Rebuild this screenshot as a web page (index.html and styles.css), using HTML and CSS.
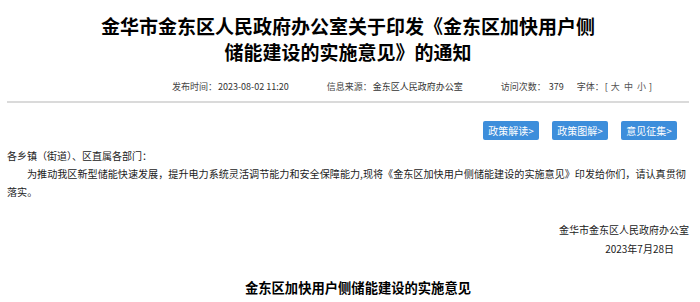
FILE: index.html
```html
<!DOCTYPE html>
<html lang="zh-CN">
<head>
  <meta charset="UTF-8">
  <title>金华市金东区人民政府办公室关于印发《金东区加快用户侧储能建设的实施意见》的通知</title>
  <link rel="stylesheet" href="styles.css">
</head>
<body>

  <div class="page">
    <h1 class="title">金华市金东区人民政府办公室关于印发《金东区加快用户侧<br>储能建设的实施意见》的通知</h1>

    <div class="meta">
      <span class="label">发布时间：</span><span class="value time">2023-08-02 11:20</span>
      <span class="label">信息来源：</span><span class="value source">金东区人民政府办公室</span>
      <span class="label">访问次数：</span><span class="value count">379</span>
      <span class="label">字体：</span><span class="value size">[ <a>大</a> <a>中</a> <a>小</a> ]</span>
    </div>

    <div class="tools">
      <a class="btn">政策解读&gt;</a>
      <a class="btn">政策图解&gt;</a>
      <a class="btn">意见征集&gt;</a>
    </div>

    <div class="content">
      <p>各乡镇（街道）、区直属各部门：</p>
      <p class="indent">为推动我区新型储能快速发展，提升电力系统灵活调节能力和安全保障能力,现将《金东区加快用户侧储能建设的实施意见》印发给你们，请认真贯彻落实。</p>

      <p class="sign">金华市金东区人民政府办公室</p>
      <p class="sign date">2023年7月28日</p>

      <p class="subtitle">金东区加快用户侧储能建设的实施意见</p>
    </div>
  </div>

</body>
</html>
```

FILE: styles.css
```css
body {
  margin: 0;
  background-color: #fff;
  font-family: "Noto Sans CJK SC", "Liberation Sans", sans-serif;
  color: #222;
}

.page {
  padding: 0 11px 0 7px;
}

.title {
  margin: 13px 0 0;
  font-size: 19px;
  line-height: 26px;
  font-weight: bold;
  color: #000;
  text-align: center;
}

.meta {
  display: flex;
  padding: 13px 0 5px 165px;
  font-size: 9px;
  line-height: 18px;
  color: #444;
  border-bottom: 2px solid #dadada;
}

.meta .value {
  color: #333;
  margin-left: 1px;
}

.meta .time,
.meta .source {
  margin-right: 38px;
}

.meta .count {
  margin-left: 3px;
  margin-right: 13px;
}

.meta .size a {
  color: #555;
  padding: 0 1px;
}

.tools {
  display: flex;
  justify-content: flex-end;
  gap: 13px;
  margin-top: 18px;
  padding-right: 12px;
}

.btn {
  display: block;
  width: 56px;
  height: 19px;
  line-height: 19px;
  font-size: 10px;
  text-align: center;
  color: #fff;
  background-color: #3d8edb;
  border-radius: 2px;
  cursor: pointer;
}

.content {
  margin-top: 7px;
  font-size: 10px;
  line-height: 18px;
}

.content p {
  margin: 0;
}

.content .indent {
  font-size: 10.1px;
  text-indent: 20px;
}

.content .sign {
  text-align: right;
  line-height: 19px;
}

.content .indent + .sign {
  margin-top: 19px;
}

.content .date {
  padding-right: 15px;
}

.content .subtitle {
  margin-top: 20px;
  font-size: 13.3px;
  line-height: 20px;
  font-weight: bold;
  color: #000;
  text-align: center;
  text-indent: 20px;
}
```
